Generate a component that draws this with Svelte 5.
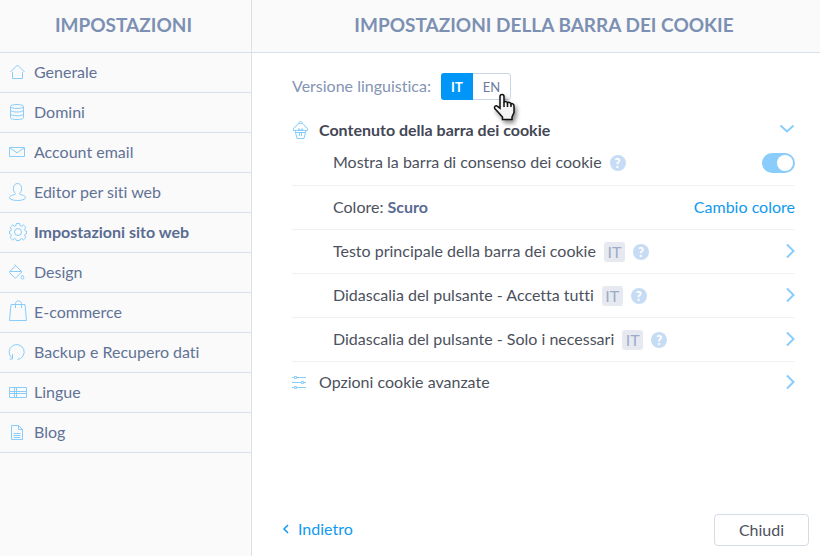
<script>
  const menu = [
    { icon: 'home', label: 'Generale' },
    { icon: 'disks', label: 'Domini' },
    { icon: 'mail', label: 'Account email' },
    { icon: 'user', label: 'Editor per siti web' },
    { icon: 'gear', label: 'Impostazioni sito web' },
    { icon: 'paint', label: 'Design' },
    { icon: 'bag', label: 'E-commerce' },
    { icon: 'restore', label: 'Backup e Recupero dati' },
    { icon: 'flag', label: 'Lingue' },
    { icon: 'page', label: 'Blog' }
  ];
  const texts = [
    'Testo principale della barra dei cookie',
    'Didascalia del pulsante - Accetta tutti',
    'Didascalia del pulsante - Solo i necessari'
  ];
  const languages = ['IT', 'EN'];

  let section = $state('Impostazioni sito web');
  let language = $state('IT');
  let showBar = $state(true);
</script>

{#snippet icon(name)}
  <svg class="icon" width="20" height="20" viewBox="0 0 20 20" aria-hidden="true">
    {#if name === 'home'}
      <path d="M2.5 10 9.5 3l7 7M4.5 10v6.500h10V10" />
    {:else if name === 'disks'}
      <ellipse cx="9" cy="4.5" rx="6.5" ry="2" />
      <path d="M2.5 4.5v11.2c0 2.400 13 2.400 13 0V4.500M2.500 8.200c0 2.400 13 2.400 13 0M2.500 12c0 2.400 13 2.400 13 0" />
    {:else if name === 'mail'}
      <path d="M1.500 5.500h15v9h-15zM2 6l7 4.800L16 6" />
    {:else if name === 'user'}
      <path d="M7.500 11.500C4 8.500 5 1.500 9.500 1.500s5.500 7 2 10c-.6 1.500 6 1.500 6 4 0 4-16 4-16 0 0-2.500 6.600-2.500 6-4z" />
    {:else if name === 'gear'}
      <circle cx="10" cy="10" r="3.500" />
      <path d="M8.300 1.500h3.400l.5 2.300 1.200.5 2-1.300 2.400 2.400-1.300 2 .5 1.200 1.500.4v2.800l-1.500.5-.5 1.200 1.300 2-2.400 2.400-2-1.300-1.200.5-.5 1.400H8.300l-.5-1.400-1.200-.5-2 1.300-2.400-2.400 1.300-2-.5-1.200-1.500-.5V9l1.500-.4.5-1.200-1.300-2L4.600 3l2 1.300 1.200-.5z" />
    {:else if name === 'paint'}
      <path d="m6.500 2.500 7.500 7.300-5.800 5.700c-.6.600-1.200.6-1.800 0L2 11c-.6-.6-.6-1.200 0-1.800L7.500 4M2 9.500h12M14.500 13c-3 4 0 4.200 0 4.200s3-.2 0-4.200z" />
    {:else if name === 'bag'}
      <path d="M3 2.500h14l1.500 16h-17zM7.500 6V1.500c0-3.500 6-3.500 6 0V6" />
    {:else if name === 'restore'}
      <path d="M3.500 15.500A7.500 7.500 0 1 1 9.500 17.500M4.500 12v5H1.500" />
    {:else if name === 'flag'}
      <path d="M1.500 5.500h17v10h-17zM6.500 5.500v10M8.500 5.500v10M1.500 9.500h17M1.500 11.500h17" />
    {:else if name === 'page'}
      <path d="M3.500 3.500h7l4 4v10h-11zM10.500 3.500v4h4M5.500 11.500h7M5.500 13.500h7M5.500 15.500h7" />
    {:else if name === 'cupcake'}
      <path d="M3 10.500l2 8h7l2-8M1.500 10.500h14c.4-2.500-.8-3.600-2.500-3.800-.2-2.200-2-3.200-4.500-3.200S4.200 4.500 4 6.700C2.300 6.900 1.100 8 1.500 10.500M7 3.500c-.8-2.800 3.800-2.800 3 0M4 12.500h9M6 10.500l1-2 1.500 2 1.500-2 1.500 2M7.500 13v3M9.500 13v3" />
    {:else if name === 'sliders'}
      <path d="M0 4.500h2M5 4.500h9M0 9.500h9M12 9.500h2M0 14.500h2M5 14.500h9M2.500 3.500h2v2h-2zM9.500 8.500h2v2h-2zM2.500 13.500h2v2h-2z" />
    {/if}
  </svg>
{/snippet}

{#snippet chevron(label)}
  <button class="chevron" type="button" aria-label={label}>
    <svg width="10" height="16" viewBox="0 0 10 16" aria-hidden="true"><path d="m2 1.500 6.500 6.500L2 14.500" /></svg>
  </button>
{/snippet}

{#snippet help(label)}
  <button class="help" type="button" aria-label={label}>?</button>
{/snippet}

<div class="app">
  <aside>
    <h2>IMPOSTAZIONI</h2>
    <nav>
      {#each menu as item}
        <a href="#{item.icon}" class:active={section === item.label} onclick={() => (section = item.label)}>
          {@render icon(item.icon)}
          {item.label}
        </a>
      {/each}
    </nav>
  </aside>

  <main>
    <h1>IMPOSTAZIONI DELLA BARRA DEI COOKIE</h1>
    <div class="content">
      <div class="version">
        <span class="text" id="version-label">Versione linguistica:</span>
        <div class="switcher" role="group" aria-labelledby="version-label">
          {#each languages as code}
            <button type="button" aria-pressed={language === code} onclick={() => (language = code)}>{code}</button>
          {/each}
          <svg class="pointer" width="26" height="32" viewBox="0 0 26 32" aria-hidden="true">
            <path d="M8 3.500c0-2.600 4-2.600 4 0v6c.3-1.300 3.200-1.200 3.500.5.600-1.100 3.200-.8 3.500.9.700-.8 3 0 3 1.800v6.800l-2 4.500v2.500h-9.500V24L6.500 19.500 2.700 15.500c-.9-2.100 1.300-3.400 2.800-2.200L8 15.200z" />
            <path d="M12 9v5M15.500 10v4M19 11v3" />
          </svg>
        </div>
      </div>

      <div class="section">
        {@render icon('cupcake')}
        <h3>Contenuto della barra dei cookie</h3>
        <button class="chevron down" type="button" aria-label="Comprimi">
          <svg width="16" height="10" viewBox="0 0 16 10" aria-hidden="true"><path d="m1.500 1.500 6.500 6 6.500-6" /></svg>
        </button>
      </div>

      <div class="row first">
        <label class="text" for="show-bar">Mostra la barra di consenso dei cookie</label>
        {@render help('Aiuto: barra di consenso')}
        <input id="show-bar" type="checkbox" role="switch" bind:checked={showBar} />
      </div>
      <div class="row">
        <span class="text">Colore: <strong>Scuro</strong></span>
        <a class="text end" href="#colore">Cambio colore</a>
      </div>
      {#each texts as text}
        <div class="row">
          <span class="text">{text}</span>
          <span class="tag">{language}</span>
          {@render help('Aiuto: ' + text)}
          {@render chevron('Apri: ' + text)}
        </div>
      {/each}
      <div class="section last">
        {@render icon('sliders')}
        <span class="text">Opzioni cookie avanzate</span>
        {@render chevron('Apri: Opzioni cookie avanzate')}
      </div>
    </div>

    <footer>
      <a class="text" href="#indietro">
        <svg width="6" height="10" viewBox="0 0 6 10" aria-hidden="true"><path d="M5 1 1 5l4 4" /></svg>
        Indietro
      </a>
      <button type="button">Chiudi</button>
    </footer>
  </main>
</div>

<style>
  :global(body) {
    margin: 0;
  }
  .app {
    display: flex;
    min-height: 100vh;
    background: #fff;
    color: #4c515d;
    font: 16px/24px Lato, "Open Sans", sans-serif;
    font-variant-ligatures: none;
  }
  button {
    margin: 0;
    padding: 0;
    border: 0;
    background: none;
    color: inherit;
    font: inherit;
    cursor: pointer;
  }
  a {
    color: #0f9af0;
    text-decoration: none;
  }
  svg {
    flex: none;
    overflow: visible;
    fill: none;
    stroke: #88cdfb;
  }
  aside {
    flex: 0 0 251px;
    border-right: 1px solid #d9e1ea;
    background: #fafafa;
  }
  h1,
  h2 {
    box-sizing: border-box;
    height: 53px;
    margin: 0;
    padding: 13px 4px 0 0;
    border-bottom: 1px solid #d9e1ea;
    background: #fafafa;
    color: #7c90b3;
    font-size: 19px;
    font-weight: 700;
    text-align: center;
  }
  h1 {
    padding-right: 0;
    padding-left: 16px;
  }
  nav a {
    display: flex;
    align-items: center;
    gap: 6px;
    box-sizing: border-box;
    height: 40px;
    padding: 0 0 2px 8px;
    border-bottom: 1px solid #d9e1ea;
    color: #617296;
  }
  nav a.active {
    color: #5a6c92;
    font-weight: 700;
  }
  main {
    display: flex;
    flex: 1;
    flex-direction: column;
    min-width: 0;
  }
  .content {
    padding: 20px 25px 20px 40px;
  }
  .text {
    padding-bottom: 2px;
  }
  .version {
    display: flex;
    align-items: center;
    gap: 10px;
    color: #8494b3;
  }
  .switcher {
    position: relative;
    display: flex;
    box-sizing: border-box;
    height: 27px;
    border: 1px solid #c9d6e6;
    border-radius: 3px;
    font-size: 13px;
  }
  .switcher button {
    width: 37px;
    color: #6b7c9f;
  }
  .switcher button:first-child {
    width: 32px;
  }
  .switcher button[aria-pressed="true"] {
    margin: -1px 0 -1px -1px;
    border-radius: 3px 0 0 3px;
    background: #0096f7;
    color: #fff;
    font-weight: 700;
  }
  .pointer {
    position: absolute;
    top: 19px;
    left: 50px;
    filter: drop-shadow(2px 3px 2px rgb(0 0 0 / 45%));
    pointer-events: none;
  }
  .pointer path {
    stroke: #111;
    stroke-width: 1.5;
  }
  .pointer path:first-child {
    fill: #f5f5f5;
  }
  .section {
    display: flex;
    align-items: center;
    gap: 8px;
    margin-top: 18px;
  }
  .section .icon {
    margin-right: -1px;
  }
  .section.last {
    margin-top: 8px;
  }
  h3 {
    margin: 0;
    font-size: 16px;
    font-weight: 700;
    color: #434856;
  }
  .row {
    display: flex;
    align-items: center;
    gap: 8px;
    box-sizing: border-box;
    height: 44px;
    padding-left: 41px;
    border-bottom: 1px solid #f0f1f3;
  }
  .row.first {
    padding-bottom: 2px;
  }
  .row strong {
    color: #5a6c92;
  }
  .end,
  .row input {
    margin: 0 0 0 auto;
  }
  .row input {
    box-sizing: border-box;
    width: 33px;
    height: 20px;
    padding: 2px;
    border-radius: 10px;
    background: #d4dce6;
    appearance: none;
    cursor: pointer;
  }
  .row input::before {
    display: block;
    width: 16px;
    height: 16px;
    border-radius: 50%;
    background: #fff;
    content: "";
  }
  .row input:checked {
    padding-left: 15px;
    background: #8acdfa;
  }
  .tag {
    width: 21px;
    height: 20px;
    border-radius: 3px;
    background: #e6e9ef;
    color: #9cacc8;
    line-height: 20px;
    text-align: center;
  }
  .help {
    width: 16px;
    height: 16px;
    border-radius: 50%;
    background: #c6dcf4;
    color: #fff;
    font-size: 13px;
    font-weight: 900;
    line-height: 16px;
  }
  .chevron {
    display: flex;
    margin-left: auto;
    padding-bottom: 2px;
  }
  .chevron svg {
    stroke-width: 2;
  }
  footer {
    display: flex;
    align-items: center;
    justify-content: space-between;
    margin-top: auto;
    padding: 0 11px 10px 31px;
  }
  footer a {
    display: flex;
    align-items: center;
    gap: 9px;
  }
  footer svg {
    stroke: #0f9af0;
    stroke-width: 1.5;
  }
  footer button {
    width: 95px;
    height: 32px;
    border: 1px solid #d4dce6;
    border-radius: 4px;
    background: #fff;
    line-height: 28px;
  }
</style>
